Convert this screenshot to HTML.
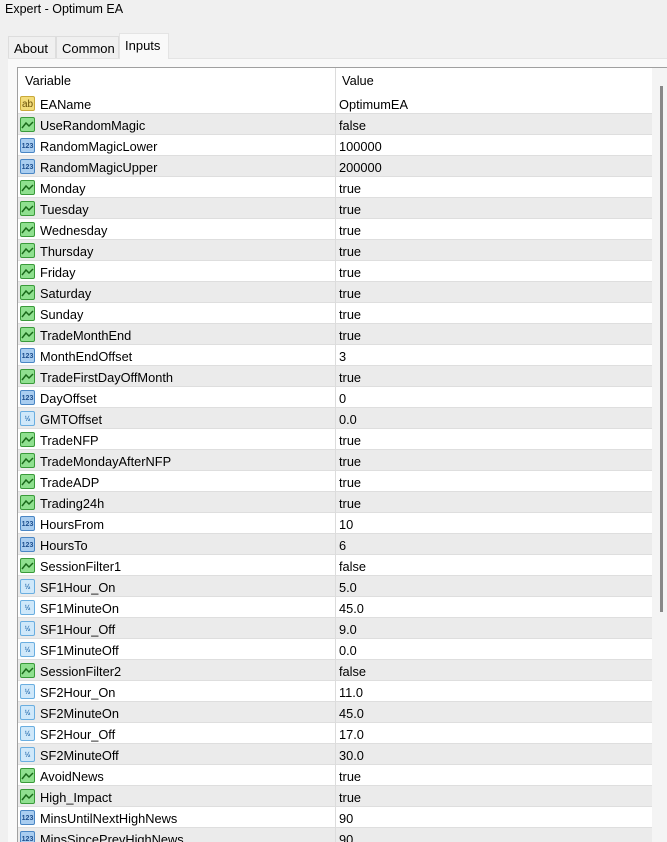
<!DOCTYPE html>
<html><head><meta charset="utf-8"><style>
*{margin:0;padding:0;box-sizing:border-box}
html,body{width:667px;height:842px;overflow:hidden}
body{background:#f0f0f0;font-family:"Liberation Sans","Noto Sans CJK SC",sans-serif;font-size:12.5px;color:#000;position:relative}
.title{position:absolute;left:5px;top:2px;font-size:12.5px}
.tab{position:absolute;top:36px;height:22px;background:#f0f0f0;border:1px solid #ddd;border-bottom:none;padding:4px 5px;font-size:13px}
.tab.act{top:33px;height:26px;background:#f9f9f9;border-color:#e4e4e4;padding-top:4px}
.panel{position:absolute;left:8px;top:58px;width:659px;height:784px;background:#f9f9f9;border-top:1px solid #e4e4e4}
.box{position:absolute;left:17px;top:67px;width:650px;height:775px;background:#fff;border-left:1px solid #a0a0a0;border-top:1px solid #a0a0a0}
.row{position:absolute;left:18px;width:634px;height:21px;border-bottom:1px solid #dedede}
.row.g{background:#ebebeb}
.row span{position:absolute;top:4px;font-size:12.8px}
.row .n{left:22px}
.row .v{left:321px}
.hdr{position:absolute;left:18px;top:68px;width:634px;height:24px}
.hdr span{position:absolute;top:5px;font-size:12.8px}
.col{position:absolute;left:335px;top:68px;width:1px;height:774px;background:#dcdcdc}
.ic{position:absolute;left:2px;top:3px;width:15px;height:15px;border-radius:2px;font-size:8px;line-height:15px;text-align:center;font-weight:bold}
.ab{background:#f3dc7a;border:1px solid #c9a93a;color:#6b5208;font-size:10px;font-weight:normal}
.b{background:#8fe08f;border:1px solid #3a9a3a}
.i{background:#a9cdf0;border:1px solid #4a86c4;color:#1d4f8e;font-size:7px}
.d{background:#cfe8fa;border:1px solid #6aaee0;color:#2a6fb0;font-size:7px}
.sb{position:absolute;left:652px;top:68px;width:15px;height:774px;background:#f4f4f4}
.th{position:absolute;left:660px;top:86px;width:3px;height:526px;background:#888}
</style></head><body>
<div class="title">Expert - Optimum EA</div>
<div class="panel"></div>
<div class="tab" style="left:8px;width:48px">About</div>
<div class="tab" style="left:56px;width:63px">Common</div>
<div class="tab act" style="left:119px;width:50px">Inputs</div>
<div class="box"></div>
<div class="hdr"><span style="left:7px">Variable</span><span style="left:324px">Value</span></div>
<div id="rows"></div>
<div class="col"></div>
<div class="sb"></div><div class="th"></div>
<script>
const d=[["ab","EAName","OptimumEA"],["b","UseRandomMagic","false"],["i","RandomMagicLower","100000"],["i","RandomMagicUpper","200000"],["b","Monday","true"],["b","Tuesday","true"],["b","Wednesday","true"],["b","Thursday","true"],["b","Friday","true"],["b","Saturday","true"],["b","Sunday","true"],["b","TradeMonthEnd","true"],["i","MonthEndOffset","3"],["b","TradeFirstDayOffMonth","true"],["i","DayOffset","0"],["d","GMTOffset","0.0"],["b","TradeNFP","true"],["b","TradeMondayAfterNFP","true"],["b","TradeADP","true"],["b","Trading24h","true"],["i","HoursFrom","10"],["i","HoursTo","6"],["b","SessionFilter1","false"],["d","SF1Hour_On","5.0"],["d","SF1MinuteOn","45.0"],["d","SF1Hour_Off","9.0"],["d","SF1MinuteOff","0.0"],["b","SessionFilter2","false"],["d","SF2Hour_On","11.0"],["d","SF2MinuteOn","45.0"],["d","SF2Hour_Off","17.0"],["d","SF2MinuteOff","30.0"],["b","AvoidNews","true"],["b","High_Impact","true"],["i","MinsUntilNextHighNews","90"],["i","MinsSincePrevHighNews","90"]];
const svgB='<svg width="13" height="13" viewBox="0 0 13 13"><path d="M1 10 L5 5 L8 8 L12 4" stroke="#1a6a1a" stroke-width="1.5" fill="none"/></svg>';
let h="";d.forEach((r,k)=>{const t=r[0];const lab=t=="ab"?"ab":t=="i"?"123":t=="d"?"½":svgB;
h+=`<div class="row${k%2?' g':''}" style="top:${93+21*k}px"><div class="ic ${t}">${lab}</div><span class="n">${r[1]}</span><span class="v">${r[2]}</span></div>`});
document.getElementById("rows").innerHTML=h;
</script>
</body></html>
